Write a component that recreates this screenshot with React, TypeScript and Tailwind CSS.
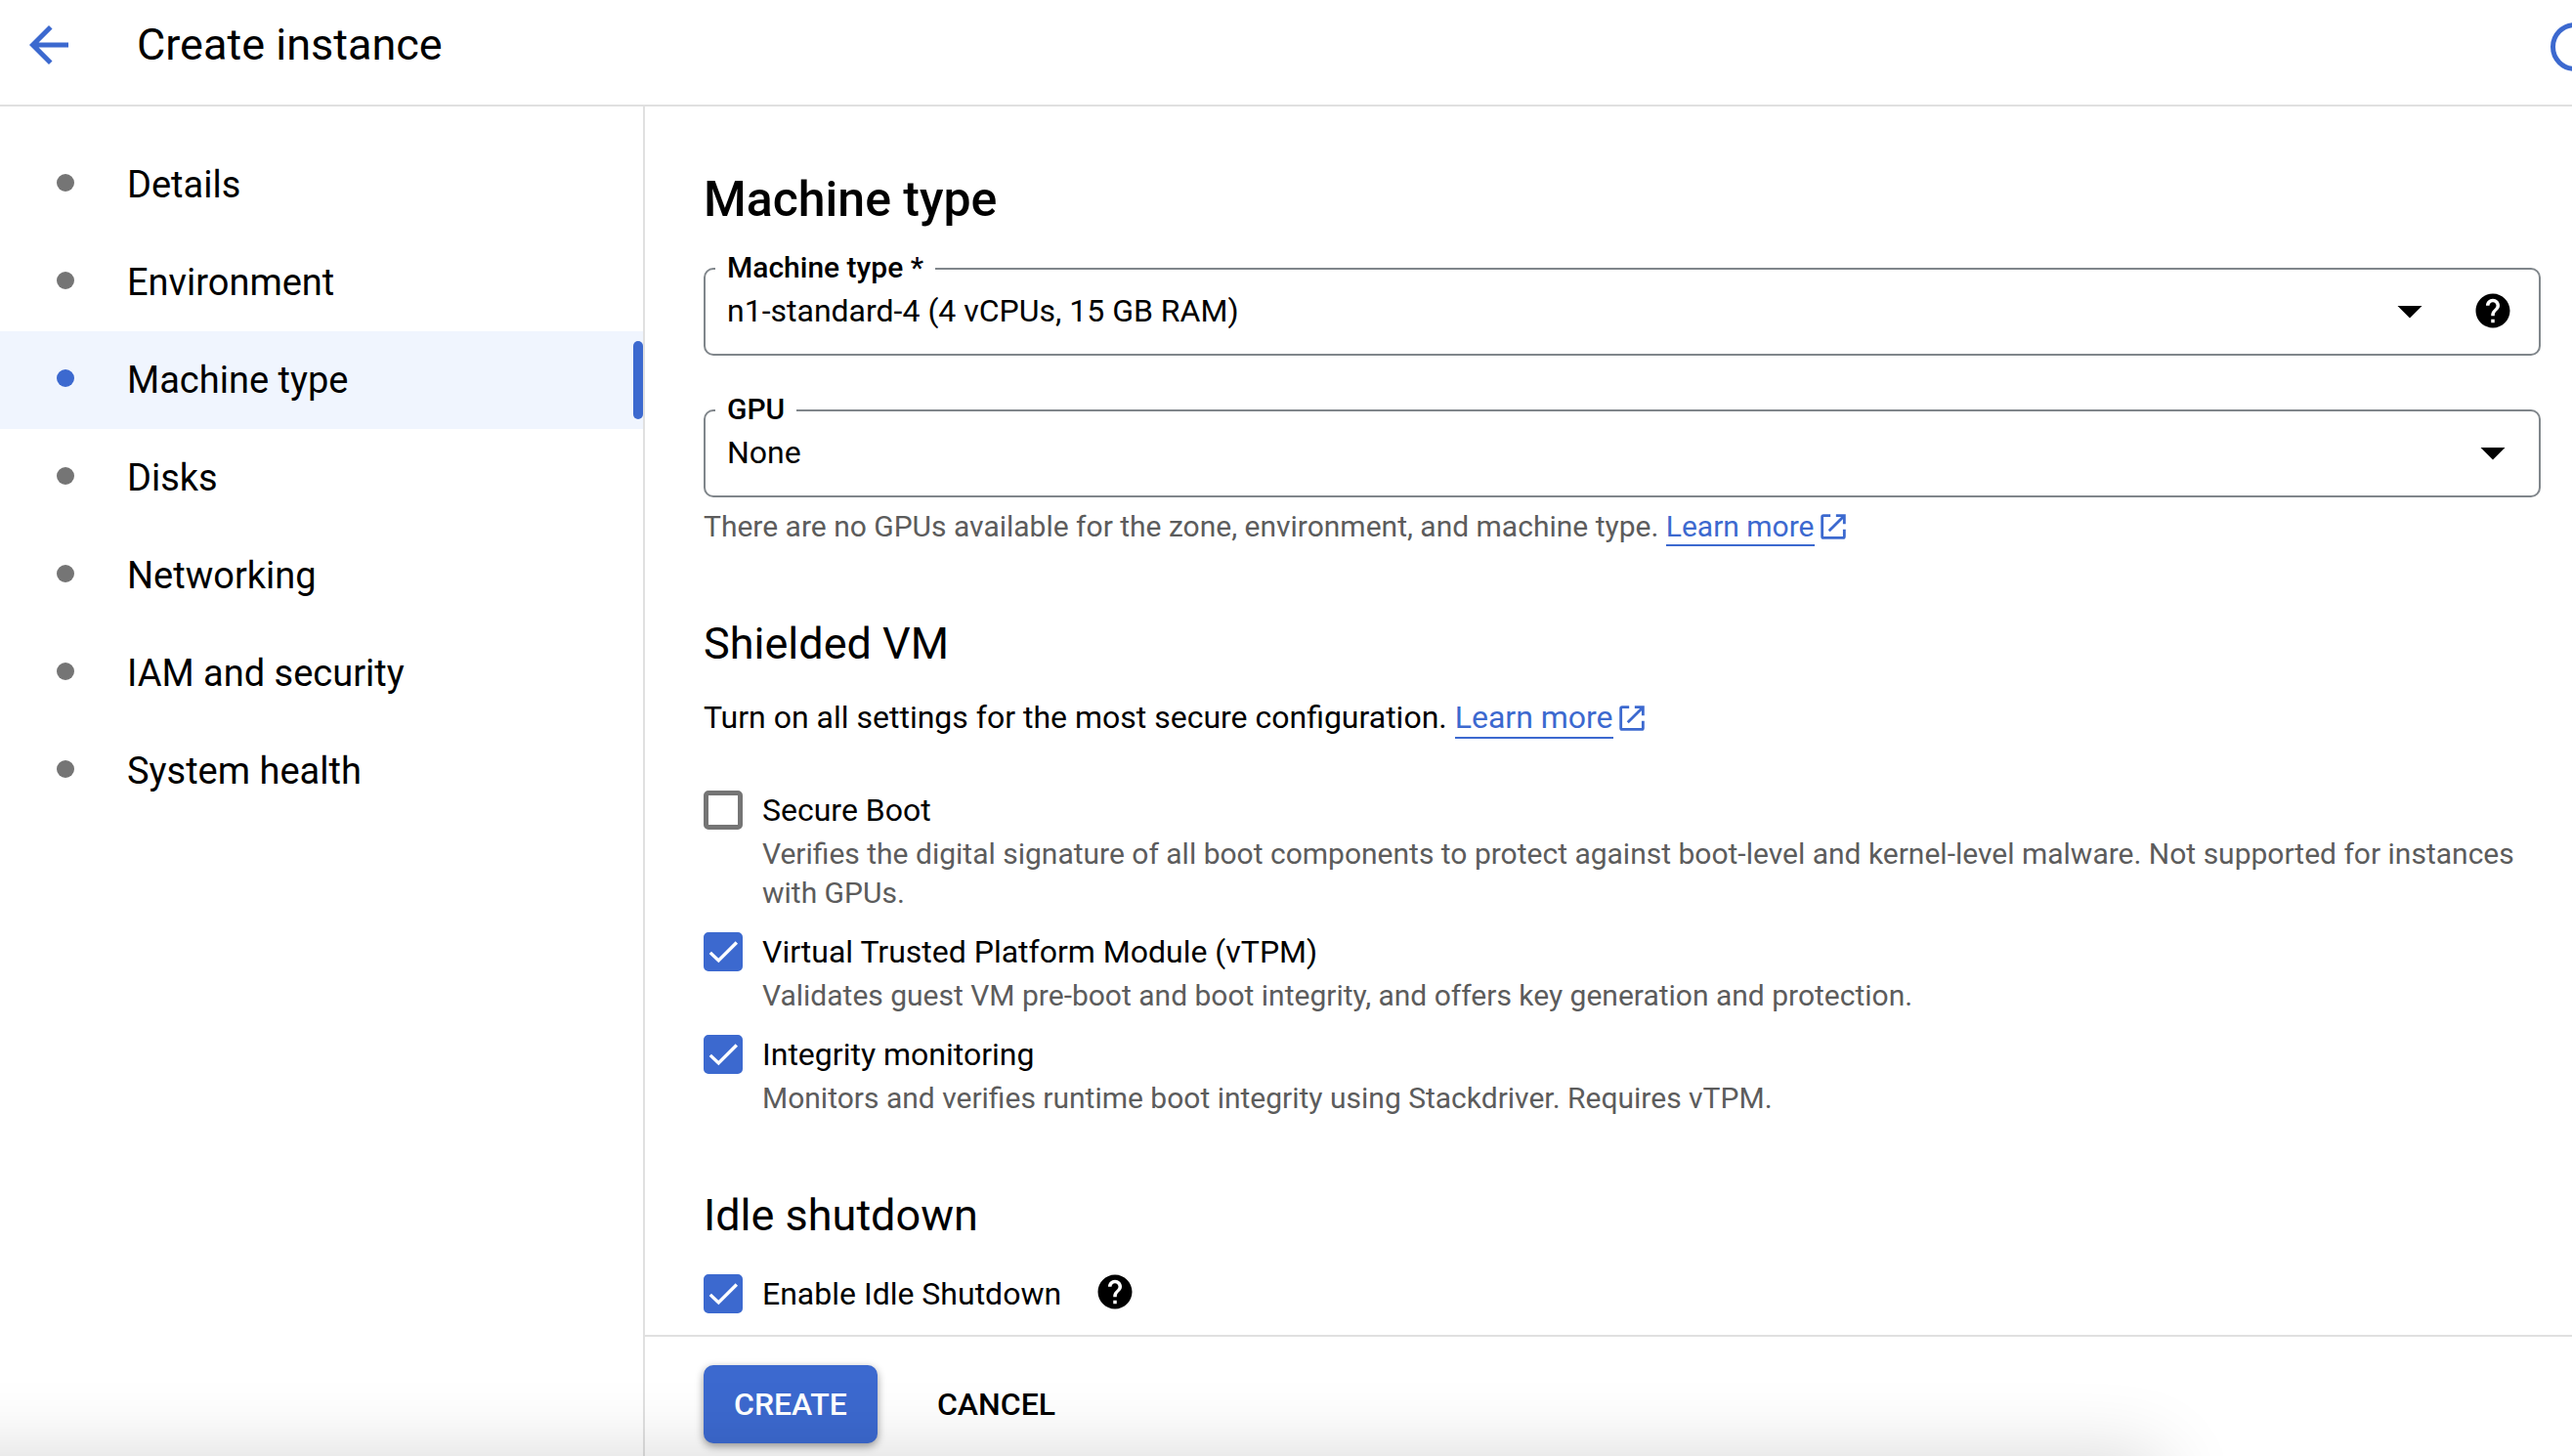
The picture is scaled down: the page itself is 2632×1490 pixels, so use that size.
import { useState, type ReactNode } from "react";

const navItems = [
  "Details",
  "Environment",
  "Machine type",
  "Disks",
  "Networking",
  "IAM and security",
  "System health",
];

function ArrowDown() {
  return (
    <svg viewBox="0 0 24 24" className="size-[60px] fill-black" aria-hidden="true">
      <path d="M7 10l5 5 5-5z" />
    </svg>
  );
}

function HelpIcon() {
  return (
    <svg viewBox="0 0 24 24" className="size-[42px] fill-black" aria-hidden="true">
      <path d="M12 2C6.48 2 2 6.48 2 12s4.48 10 10 10 10-4.48 10-10S17.52 2 12 2zm1 17h-2v-2h2v2zm2.07-7.75l-.9.92C13.45 12.9 13 13.5 13 15h-2v-.5c0-1.1.45-2.1 1.17-2.83l1.24-1.26c.37-.36.59-.86.59-1.41 0-1.1-.9-2-2-2s-2 .9-2 2H8c0-2.21 1.79-4 4-4s4 1.79 4 4c0 .88-.36 1.68-.93 2.25z" />
    </svg>
  );
}

function LearnMore() {
  return (
    <a href="#learn-more" className="text-[#3c69cf]">
      <span className="border-b-2 border-[#3c69cf] pb-px">Learn more</span>
      <svg
        viewBox="0 0 24 24"
        className="ml-0.5 inline-block size-[34px] fill-none stroke-current stroke-2 align-[-7px]"
        aria-hidden="true"
      >
        <path d="M10 4H5a1 1 0 0 0-1 1v14a1 1 0 0 0 1 1h14a1 1 0 0 0 1-1v-5M14 4h6v6M20 4 9 15" />
      </svg>
    </a>
  );
}

type SelectFieldProps = { id: string; label: string; value: string; help?: boolean };

function SelectField({ id, label, value, help }: SelectFieldProps) {
  return (
    <div className="relative flex h-[90px] items-center rounded-[10px] border-2 border-[#80868b] pr-[17px] pb-0.5">
      <label
        htmlFor={id}
        className="absolute -top-5 left-[10px] bg-white px-3 text-[30px] leading-9 font-medium"
      >
        {label}
      </label>
      <select
        id={id}
        defaultValue={value}
        className="h-full min-w-0 flex-1 appearance-none bg-transparent pl-[22px] text-[32px] outline-none"
      >
        <option>{value}</option>
      </select>
      <span className="pointer-events-none">
        <ArrowDown />
      </span>
      {help && (
        <button type="button" aria-label={`Help for ${label}`} className="mr-[9px] ml-[34px]">
          <HelpIcon />
        </button>
      )}
    </div>
  );
}

type CheckFieldProps = { id: string; label: string; checked?: boolean; children?: ReactNode };

function CheckField({ id, label, checked = false, children }: CheckFieldProps) {
  const [on, setOn] = useState(checked);
  return (
    <div className="grid grid-cols-[40px_1fr] gap-x-5">
      <span className="relative size-10">
        <input
          id={id}
          type="checkbox"
          checked={on}
          onChange={() => setOn(!on)}
          className="block size-10 appearance-none rounded-[5px] border-5 border-[#757575] checked:border-[#3c69cf] checked:bg-[#3c69cf]"
        />
        {on && (
          <svg viewBox="0 0 24 24" className="pointer-events-none absolute inset-0 size-10" aria-hidden="true">
            <path d="M4.1 12.5 9.2 17.4 20.3 6.3" fill="none" stroke="white" strokeWidth="2" />
          </svg>
        )}
      </span>
      <label htmlFor={id} className="text-[32px] leading-10">
        {label}
      </label>
      {children && (
        <p className="col-start-2 pt-[5px] text-[30px] leading-10 text-[#5c5c5c]">{children}</p>
      )}
    </div>
  );
}

export default function App() {
  return (
    <div className="relative flex min-h-screen flex-col overflow-hidden bg-white font-['Roboto',sans-serif] text-black">
      <header className="flex h-[109px] items-start border-b-2 border-[#e0e0e0] pt-4 pl-5">
        <button type="button" aria-label="Back">
          <svg viewBox="0 0 24 24" className="size-[60px] fill-[#3c69cf]" aria-hidden="true">
            <path d="M20 11H7.83l5.59-5.59L12 4l-8 8 8 8 1.41-1.41L7.83 13H20v-2z" />
          </svg>
        </button>
        <h1 className="ml-[60px] text-[45px] leading-[60px]">Create instance</h1>
        <button
          type="button"
          aria-label="Account"
          className="mt-[7px] -mr-7 ml-auto size-[50px] rounded-full border-5 border-[#3c69cf]"
        />
      </header>

      <div className="flex flex-1">
        <nav className="w-[660px] shrink-0 border-r-2 border-[#e0e0e0] pt-[30px]">
          <ul>
            {navItems.map((item) => {
              const active = item === "Machine type";
              return (
                <li key={item}>
                  <a
                    href="#section"
                    aria-current={active ? "page" : undefined}
                    className={`flex h-[100px] items-center pl-[58px] ${active ? "bg-[#f0f5fe]" : ""}`}
                  >
                    <span
                      className={`mb-[5px] size-[18px] rounded-full ${active ? "bg-[#3c69cf]" : "bg-[#757575]"}`}
                    />
                    <span className="ml-[54px] text-[38px]">{item}</span>
                    {active && <span className="ml-auto h-20 w-[10px] rounded-full bg-[#3c69cf]" />}
                  </a>
                </li>
              );
            })}
          </ul>
        </nav>

        <div className="flex min-w-0 flex-1 flex-col">
          <main className="flex-1 pr-8 pl-[60px]">
            <h2 className="pt-[65px] text-[50px] leading-[60px] font-medium">Machine type</h2>
            <div className="mt-10 flex flex-col gap-[55px]">
              <SelectField id="machine" label="Machine type *" value="n1-standard-4 (4 vCPUs, 15 GB RAM)" help />
              <SelectField id="gpu" label="GPU" value="None" />
            </div>
            <p className="mt-[10px] text-[30px] leading-10 text-[#5c5c5c]">
              There are no GPUs available for the zone, environment, and machine type. <LearnMore />
            </p>

            <h3 className="mt-[70px] text-[45px] leading-[60px]">Shielded VM</h3>
            <p className="mt-[25px] text-[32px] leading-10">
              Turn on all settings for the most secure configuration. <LearnMore />
            </p>
            <div className="mt-[55px] flex flex-col gap-5">
              <CheckField id="secure-boot" label="Secure Boot">
                Verifies the digital signature of all boot components to protect against boot-level and
                kernel-level malware. Not supported for instances with GPUs.
              </CheckField>
              <CheckField id="vtpm" label="Virtual Trusted Platform Module (vTPM)" checked>
                Validates guest VM pre-boot and boot integrity, and offers key generation and protection.
              </CheckField>
              <CheckField id="integrity" label="Integrity monitoring" checked>
                Monitors and verifies runtime boot integrity using Stackdriver. Requires vTPM.
              </CheckField>
            </div>

            <h3 className="mt-[70px] text-[45px] leading-[60px]">Idle shutdown</h3>
            <div className="mt-[30px] flex h-10 items-center">
              <CheckField id="idle" label="Enable Idle Shutdown" checked />
              <button type="button" aria-label="Help for idle shutdown" className="mb-1 ml-[34px]">
                <HelpIcon />
              </button>
            </div>
          </main>

          <footer className="flex h-[124px] gap-[30px] border-t-2 border-[#e0e0e0] pt-[29px] pl-[60px]">
            <button
              type="button"
              className="h-20 rounded-[10px] bg-[#3c69cf] px-[31px] text-[32px] font-medium text-white shadow-[0_3px_8px_rgba(0,0,0,0.4)]"
            >
              CREATE
            </button>
            <button type="button" className="h-20 px-[31px] text-[32px] font-medium">
              CANCEL
            </button>
          </footer>
        </div>
      </div>

      <div className="pointer-events-none absolute top-full right-[16%] -left-40 h-40 shadow-[0_0_80px_rgba(0,0,0,0.16)]" />
    </div>
  );
}
